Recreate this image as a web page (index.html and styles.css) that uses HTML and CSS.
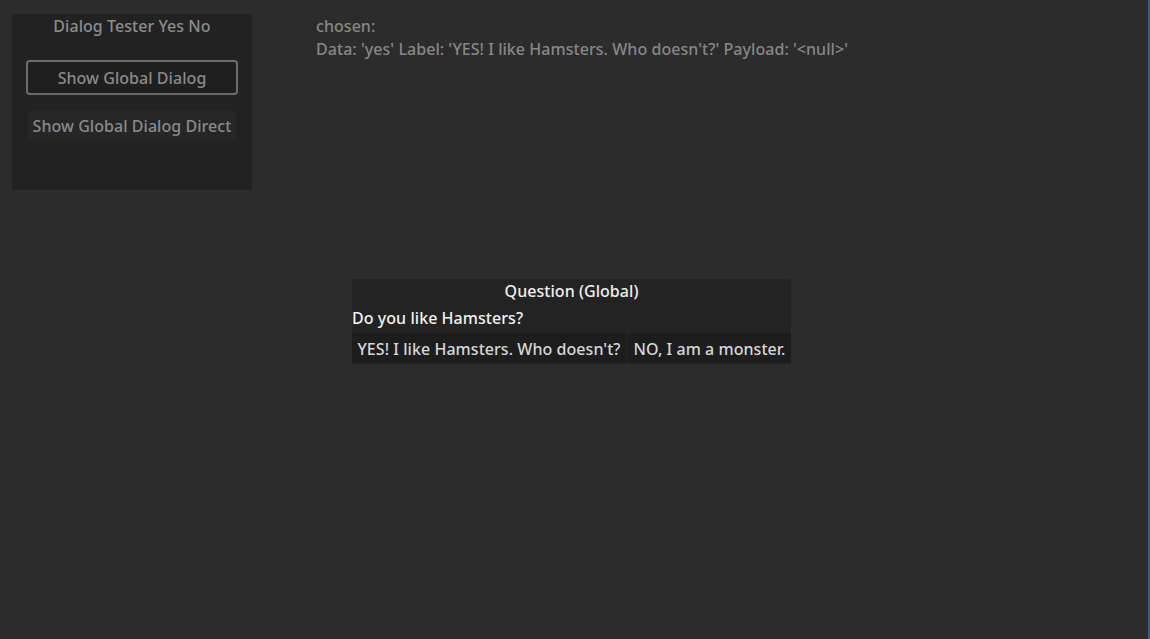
FILE: index.html
```html
<!DOCTYPE html>
<html>
<head>
<meta charset="utf-8">
<link rel="stylesheet" href="styles.css">
</head>
<body>
<div class="screen">
  <div class="top">
    <div class="panel">
      <div class="panel-title">Dialog Tester Yes No</div>
      <div class="btn btn-outline">Show Global Dialog</div>
      <div class="btn btn-flat">Show Global Dialog Direct</div>
    </div>
    <div class="output">
      <div class="line">chosen:</div>
      <div class="line">Data: 'yes' Label: 'YES! I like Hamsters. Who doesn't?' Payload: '&lt;null&gt;'</div>
    </div>
  </div>
  <div class="dialog-area">
    <div class="dialog">
      <div class="dialog-title">Question (Global)</div>
      <div class="dialog-text">Do you like Hamsters?</div>
      <div class="dialog-buttons">
        <div class="dbtn dbtn-yes">YES! I like Hamsters. Who doesn't?</div>
        <div class="dbtn dbtn-no">NO, I am a monster.</div>
      </div>
    </div>
  </div>
  <div class="edge"></div>
</div>
</body>
</html>
```

FILE: styles.css
```css
html, body {
  margin: 0;
  padding: 0;
  width: 1150px;
  height: 639px;
  overflow: hidden;
  background: #2c2c2c;
  font-family: "Noto Sans", "Open Sans", sans-serif;
  font-size: 16px;
  font-weight: 500;
  letter-spacing: 0.05px;
}

.screen {
  position: relative;
  width: 1150px;
  height: 639px;
}

.top {
  display: flex;
  padding: 14px 0 0 12px;
}

.panel {
  width: 240px;
  height: 176px;
  box-sizing: border-box;
  background: #222222;
  border-radius: 3px;
  display: flex;
  flex-direction: column;
  align-items: center;
  padding-top: 1px;
}

.panel-title {
  color: #8c8c8c;
  line-height: 22px;
}

.btn {
  color: #8a8a8a;
  text-align: center;
  box-sizing: border-box;
  white-space: nowrap;
}

.btn-outline {
  margin-top: 23px;
  width: 212px;
  height: 35px;
  line-height: 33px;
  border: 2px solid #6b6b6b;
  border-radius: 4px;
  background: #1f1f1f;
}

.btn-flat {
  margin-top: 15px;
  width: 208px;
  height: 31px;
  line-height: 33px;
  background: #262626;
  border-radius: 2px;
}

.output {
  margin-left: 64px;
  color: #878787;
  line-height: 23px;
  padding-top: 1px;
  white-space: nowrap;
}

.dialog-area {
  display: flex;
  padding: 89px 0 0 352px;
}

.dialog {
  width: 439px;
  background: #232323;
  border-radius: 2px;
  display: flex;
  flex-direction: column;
}

.dialog-title {
  color: #f0f0f0;
  text-align: center;
  line-height: 24px;
}

.dialog-text {
  color: #f0f0f0;
  line-height: 30px;
}

.dialog-buttons {
  display: flex;
  gap: 2px;
  padding-bottom: 1px;
}

.dbtn {
  background: #1d1d1d;
  color: #d6d6d6;
  height: 30px;
  line-height: 32px;
  text-align: center;
  white-space: nowrap;
}

.dbtn-yes {
  width: 274px;
}

.dbtn-no {
  flex: 1;
}

.edge {
  position: absolute;
  top: 0;
  right: 0;
  width: 2px;
  height: 639px;
  background: #3e5c7c;
}
```
